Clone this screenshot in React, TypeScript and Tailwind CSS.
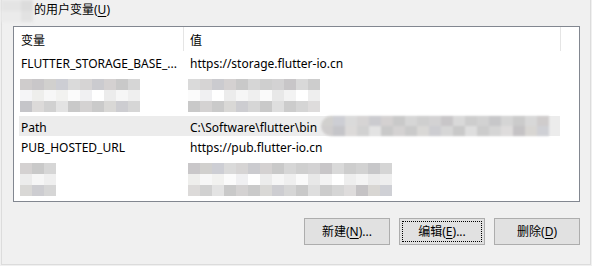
const font = "font-['Segoe_UI','Noto_Sans','Noto_Sans_CJK_SC',sans-serif]";

const bandA = ['bg-[#cfcccc]', 'bg-[#c9c7c9]', 'bg-[#d1d0ce]', 'bg-[#cdced4]', 'bg-[#dadada]', 'bg-[#d6d4d4]', 'bg-[#cbcbcf]', 'bg-[#d4d1d1]', 'bg-[#c9c9c9]', 'bg-[#d6d6d6]', 'bg-[#cfcfcf]', 'bg-[#d3d2d3]', 'bg-[#c8c6c8]', 'bg-[#d9d9d9]', 'bg-[#cdcdcd]', 'bg-[#d2d2d2]', 'bg-[#c7c7c9]', 'bg-[#d5d5d5]', 'bg-[#cbcbcb]', 'bg-[#d8d8d8]'];
const bandB = ['bg-[#eeeeee]', 'bg-[#ffffff]', 'bg-[#e9e9e9]', 'bg-[#f5f5f7]', 'bg-[#eeeeec]', 'bg-[#f7f7f7]', 'bg-[#f2f2f0]', 'bg-[#fbfbfb]', 'bg-[#f0f0f2]', 'bg-[#ffffff]', 'bg-[#ececec]', 'bg-[#f6f6f6]', 'bg-[#efefef]', 'bg-[#fafafa]', 'bg-[#e8e8e8]', 'bg-[#f3f3f3]', 'bg-[#ffffff]', 'bg-[#eeeeee]', 'bg-[#f4f4f4]', 'bg-[#ebebeb]'];
const bandC = ['bg-[#dedcdc]', 'bg-[#c5c3c5]', 'bg-[#d8d6d3]', 'bg-[#cfd0d5]', 'bg-[#d4d4d4]', 'bg-[#cfcdcd]', 'bg-[#c5c5c9]', 'bg-[#dcdad9]', 'bg-[#d1d1d1]', 'bg-[#e3e3e3]', 'bg-[#c9c9c9]', 'bg-[#d4d2d2]', 'bg-[#cacaca]', 'bg-[#d9d8d6]', 'bg-[#cdcdd1]', 'bg-[#d6d6d6]', 'bg-[#c9c9c9]', 'bg-[#dedede]', 'bg-[#cccccc]', 'bg-[#d5d5d5]'];

function Mosaic({ cols, offset = 0 }: { cols: number; offset?: number }) {
  const bands = [bandA, bandB, bandC];
  return (
    <div className="flex flex-col">
      {bands.map((band, i) => (
        <div key={i} className="flex">
          {Array.from({ length: cols }).map((_, j) => (
            <div key={j} className={`w-[12px] h-[11px] ${band[(j + offset + i * 3) % band.length]}`} />
          ))}
        </div>
      ))}
    </div>
  );
}

function Row({ name, value }: { name: string; value: string }) {
  return (
    <div className="flex h-[20px] items-center pt-[3px]">
      <div className="w-[170px] pl-[7px] truncate">{name}</div>
      <div className="pl-[6px] whitespace-nowrap">{value}</div>
    </div>
  );
}

function Btn({ label, k, rest, focused }: { label: string; k: string; rest: string; focused?: boolean }) {
  return (
    <button className="w-[86px] h-[27px] border border-[#adadad] bg-[#e1e1e1] flex items-center justify-center p-[2px]">
      <span className={`w-full h-full flex items-center justify-center pt-px ${focused ? 'border border-dotted border-black' : 'border border-transparent'}`}>
        {label}(<span className="underline underline-offset-2">{k}</span>){rest}
      </span>
    </button>
  );
}

export default function App() {
  return (
    <div className={`w-[592px] h-[266px] bg-[#f0f0f0] text-[12px] text-black overflow-hidden ${font}`}>
      <div className="relative ml-px w-[590px] h-[265px] border-x border-b border-[#dcdcdc]">
        <div className="absolute left-[-1px] top-0 w-[32px] h-[22px] flex flex-col blur-[1.5px]">
          <div className="flex"><div className="w-[20px] h-[11px] bg-[#e4e4e4]" /><div className="w-[12px] h-[11px] bg-[#dcdcdc]" /></div>
          <div className="flex"><div className="w-[20px] h-[11px] bg-[#ebebeb]" /><div className="w-[12px] h-[11px] bg-[#e2e2e2]" /></div>
        </div>
        <div className="h-[26px] pl-[32px] pt-px leading-[18px]">
          的用户变量(<span className="underline underline-offset-2">U</span>)
        </div>
        <div className="ml-[11px] w-[567px] h-[176px] border border-[#828790] bg-white flex flex-col relative">
          <div className="flex h-[25px] items-center pt-[2px] relative">
            <div className="w-[170px] pl-[7px]">变量</div>
            <div className="pl-[6px]">值</div>
            <div className="absolute left-[169px] top-0 h-[24px] w-px bg-[#e5e5e5]" />
            <div className="absolute left-[546px] top-0 h-[24px] w-px bg-[#e5e5e5]" />
          </div>
          <Row name="FLUTTER_STORAGE_BASE_..." value="https://storage.flutter-io.cn" />
          <div className="h-[44px] flex pt-[7px]">
            <div className="w-[170px] pl-[6px]"><Mosaic cols={10} /></div>
            <div className="pl-[4px]"><Mosaic cols={11} offset={4} /></div>
          </div>
          <div className="flex h-[20px] items-center pt-[3px] ml-[5px] w-[541px] bg-[#ececec] relative">
            <div className="w-[165px] pl-[2px]">Path</div>
            <div className="pl-[6px] whitespace-nowrap">C:\Software\flutter\bin</div>
            <div className="absolute left-[302px] top-0 h-[20px] w-[228px] rounded-l-[10px] overflow-hidden blur-[1px] flex flex-col">
              <div className="flex">{Array.from({ length: 19 }).map((_, j) => <div key={j} className={`w-[12px] h-[10px] ${bandA[(j + 2) % bandA.length]}`} />)}</div>
              <div className="flex">{Array.from({ length: 19 }).map((_, j) => <div key={j} className={`w-[12px] h-[10px] ${bandC[(j + 5) % bandC.length]}`} />)}</div>
            </div>
          </div>
          <Row name="PUB_HOSTED_URL" value="https://pub.flutter-io.cn" />
          <div className="h-[44px] flex pt-[7px]">
            <div className="w-[170px] pl-[6px]"><Mosaic cols={3} offset={7} /></div>
            <div className="pl-[4px]"><Mosaic cols={17} offset={1} /></div>
          </div>
        </div>
        <div className="flex justify-end gap-[9px] pr-[10px] mt-[16px]">
          <Btn label="新建" k="N" rest="..." />
          <Btn label="编辑" k="E" rest="..." focused />
          <Btn label="删除" k="D" rest="" />
        </div>
      </div>
    </div>
  );
}
